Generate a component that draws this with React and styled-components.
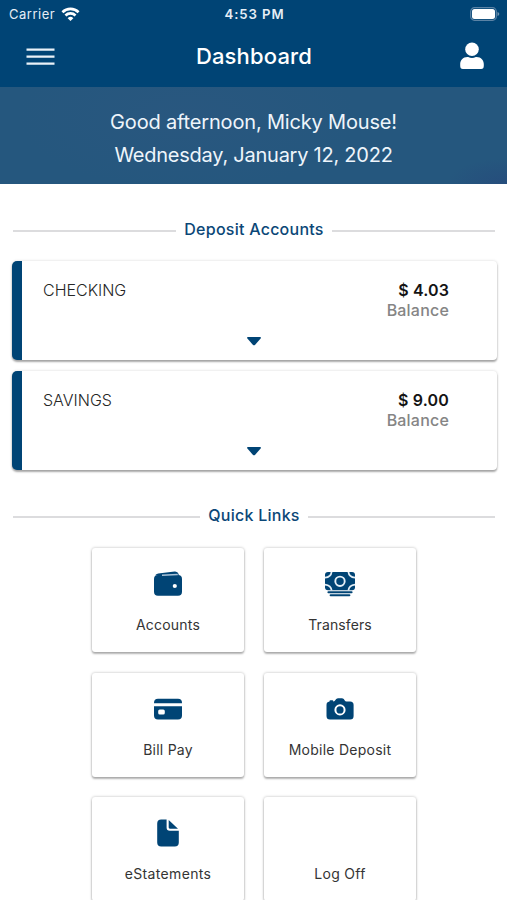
import React from "react";
import styled, { createGlobalStyle } from "styled-components";

const GlobalStyle = createGlobalStyle`
  * { box-sizing: border-box; }
  html, body { margin: 0; background: #fff; height: 100%; overflow: hidden; }
  body { font-family: Inter, "Liberation Sans", sans-serif; }
`;

const Screen = styled.div`
  width: 507px;
  height: 900px;
  overflow: hidden;
  background: #fff;
`;

const StatusBar = styled.div`
  display: grid;
  grid-template-columns: 1fr auto 1fr;
  align-items: center;
  height: 27px;
  padding: 0 7px 0 9px;
  background: #004475;
  color: #e6eef5;
`;

const Carrier = styled.div`
  display: flex;
  align-items: center;
  gap: 6px;
  font-size: 13px;
  line-height: 28px;
  letter-spacing: 0.5px;
`;

const Clock = styled.div`
  font-size: 13.2px;
  font-weight: 600;
  line-height: 28px;
  letter-spacing: 0.9px;
`;

const BatteryIcon = styled.svg`
  display: block;
  justify-self: end;
`;

const NavBar = styled.header`
  display: grid;
  grid-template-columns: 1fr auto 1fr;
  align-items: center;
  height: 60px;
  padding: 0 22px 0 26px;
  background: #004475;
  color: #fff;
`;

const NavIcon = styled.svg`
  display: block;
  justify-self: ${(p) => p.$side || "start"};
`;

const Title = styled.h1`
  margin: 0 3px 0 0;
  font-size: 22px;
  font-weight: 500;
  line-height: 58px;
  height: 60px;
  letter-spacing: 0.15px;
`;

const Banner = styled.section`
  height: 97px;
  padding-top: 19px;
  background:
    radial-gradient(ellipse 60px 26px at 100% 100%, #264d7c, transparent),
    radial-gradient(ellipse 170px 75px at 37% 30%, #29577f, transparent),
    #25577e;
  color: #eef5fb;
  font-size: 20px;
  line-height: 33px;
  text-align: center;
`;

const BannerLine = styled.div`
  letter-spacing: ${(p) => p.$spacing};
`;

const SectionTitle = styled.h2`
  display: flex;
  align-items: center;
  gap: 8px;
  margin: ${(p) => p.$top} 12px 0 13px;
  height: 24px;
  color: #0b4777;
  font-size: 16px;
  font-weight: 500;
  letter-spacing: ${(p) => p.$spacing};
  white-space: nowrap;

  &::before, &::after {
    content: "";
    flex: 1;
    height: 2px;
    margin-top: 3px;
    background: #dcdcde;
  }
`;

const AccountList = styled.div`
  display: flex;
  flex-direction: column;
  gap: 11px;
  margin: 20px 10px 0 12px;
`;

const AccountCard = styled.article`
  display: grid;
  grid-template-rows: 1fr auto;
  height: 99px;
  padding: 19px 48px 10px 21px;
  border-left: 10px solid #004475;
  border-radius: 5px 4px 4px 5px;
  background: #fff;
  box-shadow: 0 2px 2px rgba(0, 0, 0, 0.32), 0 0 3px rgba(0, 0, 0, 0.16);
`;

const AccountRow = styled.div`
  display: flex;
  justify-content: space-between;
  font-size: 16px;
  line-height: 20px;
`;

const AccountName = styled.div`
  color: #262626;
  font-weight: 300;
`;

const Amount = styled.div`
  color: #141414;
  font-weight: 600;
  letter-spacing: 0.15px;
  text-align: right;
`;

const Balance = styled.div`
  color: #858585;
  font-weight: 500;
  letter-spacing: 0.2px;
`;

const Expand = styled.div`
  display: flex;
  justify-content: center;
  padding-left: 16px;
  height: 14px;
  color: #004475;
`;

const LinkGrid = styled.nav`
  display: grid;
  grid-template-columns: 152px 152px;
  grid-auto-rows: 104px;
  gap: 20.6px 20px;
  margin: 21px 0 0 92px;
`;

const LinkTile = styled.div`
  display: flex;
  flex-direction: column;
  align-items: center;
  padding-top: 20px;
  border-radius: 3px;
  background: #fff;
  color: #004475;
  box-shadow: 0 2px 2px rgba(0, 0, 0, 0.26), 0 0 3px rgba(0, 0, 0, 0.28);
`;

const TileIcon = styled.svg`
  display: block;
  width: 32px;
  height: 32px;
  fill: currentColor;
`;

const TileLabel = styled.div`
  margin-top: 15px;
  color: #343434;
  font-size: 14px;
  line-height: 20px;
  letter-spacing: ${(p) => p.$spacing};
`;

const WalletIcon = () => (
  <>
    <path d="M3.200 7.300Q4 6 6.200 5.600L22.600 3.500Q25.800 3.200 26.600 6v1.200z" />
    <path fillRule="evenodd" d="M6 7h20q4 0 4 4v12.800q0 4-4 4H6q-4 0-4-4V11q0-4 4-4zM22.800 15.900a2.100 2.100 0 1 0 0 4.200a2.100 2.100 0 0 0 0-4.200z" />
    <path d="M10 7.200 25.800 6.600" stroke="#a9c3d8" strokeWidth="1.500" fill="none" />
  </>
);

const CashIcon = () => (
  <>
    <rect x="1" y="4" width="30" height="18.200" rx="3" />
    <circle cx="16" cy="13.300" r="4.700" fill="none" stroke="#e6f0f7" strokeWidth="1.900" />
    <path d="M7.600 3.800Q7 9 1 9.600M24.400 3.800Q25 9 31 9.600M7.600 22.400Q7 17.200 1 16.600M24.400 22.400Q25 17.200 31 16.600" fill="none" stroke="#e6f0f7" strokeWidth="1.700" />
    <path d="M4.400 24.200h23.200M6.600 27.200h18.800" fill="none" stroke="currentColor" strokeWidth="2" strokeLinecap="round" />
  </>
);

const CardIcon = () => (
  <>
    <path d="M2 10.200V9.700Q2 5.700 6 5.700h20q4 0 4 4v.5z" />
    <path fillRule="evenodd" d="M2 13.300h28v9.300q0 4-4 4H6q-4 0-4-4zM7.800 16.400q-1.600 0-1.600 1.600v2q0 1.600 1.600 1.600h3.400q1.600 0 1.600-1.600v-2q0-1.600-1.600-1.600z" />
  </>
);

const CameraIcon = () => (
  <path fillRule="evenodd" d="M5.500 8.600V8.300q0-1 1-1h1.800q1 0 1 1v.3h.4q1-.3 1.700-1.500l.8-1.200Q13 5.200 14.200 5.200h3.600q1.200 0 2 .9l.8 1.100q.7 1.100 1.900 1.400h3.600q3.500 0 3.500 3.500v11q0 3.500-3.500 3.500H6q-3.500 0-3.500-3.500V12q0-2.900 3-3.400zM16 11.300a5.600 5.600 0 1 0 0 11.200a5.600 5.600 0 0 0 0-11.200zM16 13.300a3.600 3.600 0 1 1 0 7.200a3.600 3.600 0 0 1 0-7.200z" />
);

const DocumentIcon = () => (
  <>
    <path d="M9.200 2.500h5.400v8q0 3.200 3.200 3.200h9v11.900q0 4-4 4H9.200q-4 0-4-4V6.500q0-4 4-4z" />
    <path d="M16.700 3.100v7.500q0 1.100 1.100 1.100h8.200z" />
  </>
);

const accounts = [
  { name: "CHECKING", amount: "$ 4.03" },
  { name: "SAVINGS", amount: "$ 9.00" },
];

const links = [
  { label: "Accounts", Icon: WalletIcon, spacing: "0.2px" },
  { label: "Transfers", Icon: CashIcon, spacing: "0.1px" },
  { label: "Bill Pay", Icon: CardIcon, spacing: "0.25px" },
  { label: "Mobile Deposit", Icon: CameraIcon, spacing: "0.25px" },
  { label: "eStatements", Icon: DocumentIcon, spacing: "0.35px" },
  { label: "Log Off", spacing: "0.3px" },
];

function Wifi() {
  return (
    <svg width="19" height="15" viewBox="0 0 20 15" fill="none" stroke="#fff" strokeWidth="2.8">
      <path d="M1.500 5.100a12.200 12.200 0 0 1 17 0" />
      <path d="M4.700 8.500a7.600 7.600 0 0 1 10.600 0" />
      <path d="M10 14.400 7 11.400a4.300 4.300 0 0 1 6 0z" fill="#fff" stroke="none" />
    </svg>
  );
}

export default function App() {
  return (
    <Screen>
      <GlobalStyle />
      <StatusBar>
        <Carrier>Carrier <Wifi /></Carrier>
        <Clock>4:53 PM</Clock>
        <BatteryIcon width="30" height="14" viewBox="0 0 30 14">
          <rect x="0.7" y="0.7" width="25.6" height="12.6" rx="3.8" fill="none" stroke="#5b83a5" strokeWidth="1.2" />
          <rect x="2" y="2" width="23" height="10" rx="2.5" fill="#fff" />
          <path d="M27.500 5v4q1.800-.6 1.800-2t-1.800-2z" fill="#7294b0" />
        </BatteryIcon>
      </StatusBar>
      <NavBar>
        <NavIcon width="29" height="18" viewBox="0 0 29 18" stroke="#e9f1f8" strokeWidth="2.3">
          <path d="M.5 1.700h28M.5 8.700h28M.5 15.700h28" />
        </NavIcon>
        <Title>Dashboard</Title>
        <NavIcon $side="end" width="26" height="30" viewBox="0 0 26 30" fill="#fff">
          <circle cx="13" cy="7.200" r="6.800" />
          <path d="M8.500 15h.7q3.800 1.800 7.600 0h.7c4.700 0 7.300 3.600 7.300 7.100v1.700q0 3.200-2.600 3.200H3.800q-2.600 0-2.600-3.200v-1.700C1.200 18.600 3.800 15 8.500 15z" />
        </NavIcon>
      </NavBar>
      <Banner>
        <BannerLine $spacing="-0.17px">Good afternoon, Micky Mouse!</BannerLine>
        <BannerLine $spacing="-0.24px">Wednesday, January 12, 2022</BannerLine>
      </Banner>
      <SectionTitle $top="33px" $spacing="0.25px">Deposit Accounts</SectionTitle>
      <AccountList>
        {accounts.map((a) => (
          <AccountCard key={a.name}>
            <AccountRow>
              <AccountName>{a.name}</AccountName>
              <Amount>
                {a.amount}
                <Balance>Balance</Balance>
              </Amount>
            </AccountRow>
            <Expand>
              <svg width="16" height="14" viewBox="0 0 16 14" fill="currentColor">
                <path d="M1.800 1h12.400q1.200.2.400 1.400L9.200 8.700q-1.200 1.200-2.400 0L1.400 2.400Q.6 1.200 1.800 1z" />
              </svg>
            </Expand>
          </AccountCard>
        ))}
      </AccountList>
      <SectionTitle $top="33px" $spacing="0.25px">Quick Links</SectionTitle>
      <LinkGrid>
        {links.map(({ label, Icon, spacing }) => (
          <LinkTile key={label}>
            <TileIcon viewBox="0 0 32 32">{Icon && <Icon />}</TileIcon>
            <TileLabel $spacing={spacing}>{label}</TileLabel>
          </LinkTile>
        ))}
      </LinkGrid>
    </Screen>
  );
}
